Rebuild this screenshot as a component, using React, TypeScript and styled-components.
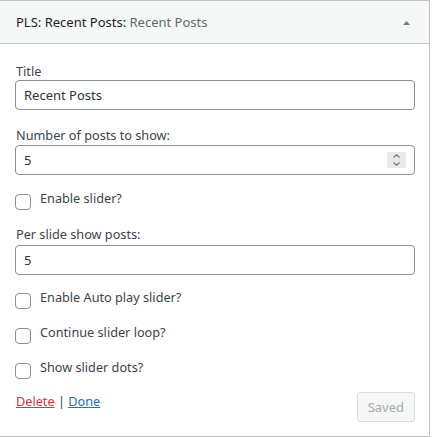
import * as React from 'react';
import styled, { createGlobalStyle } from 'styled-components';

const GlobalStyle = createGlobalStyle`
    html, body {
        margin: 0;
        padding: 0;
        background: #ffffff;
    }
    body {
        font-family: "Noto Sans", "Open Sans", sans-serif;
        font-size: 12.7px;
        color: #3c434a;
    }
`;

const checkboxes = [
    { label: 'Enable Auto play slider?', gap: 13 },
    { label: 'Continue slider loop?', gap: 14 },
    { label: 'Show slider dots?', gap: 14 },
];

const App = () => {
    return (
        <>
            <GlobalStyle />
            <Widget>
                <WidgetTop>
                    <WidgetTitle>
                        PLS: Recent Posts:<InWidgetTitle> Recent Posts</InWidgetTitle>
                    </WidgetTitle>
                    <Toggle width="7" height="4" viewBox="0 0 7 4">
                        <polygon points="3.5,0 7,4 0,4" fill="#787c82" />
                    </Toggle>
                </WidgetTop>
                <WidgetInside>
                    <Field $gap={18}>
                        <Label>Title</Label>
                        <TextInput type="text" defaultValue="Recent Posts" />
                    </Field>
                    <Field $gap={16} $labelGap={1}>
                        <Label>Number of posts to show:</Label>
                        <NumberBox>
                            <NumberValue type="text" defaultValue="5" />
                            <Spinner>
                                <svg width="7" height="4" viewBox="0 0 7 4">
                                    <polyline points="0.5,3.5 3.5,0.8 6.5,3.5" fill="none" stroke="#6f6f75" strokeWidth="1.1" />
                                </svg>
                                <svg width="7" height="4" viewBox="0 0 7 4">
                                    <polyline points="0.5,0.5 3.5,3.2 6.5,0.5" fill="none" stroke="#6f6f75" strokeWidth="1.1" />
                                </svg>
                            </Spinner>
                        </NumberBox>
                    </Field>
                    <CheckRow $gap={14}>
                        <Checkbox type="checkbox" />
                        <CheckLabel>Enable slider?</CheckLabel>
                    </CheckRow>
                    <Field $gap={15} $labelGap={2}>
                        <Label>Per slide show posts:</Label>
                        <TextInput type="text" defaultValue="5" />
                    </Field>
                    {checkboxes.map((item) => (
                        <CheckRow key={item.label} $gap={item.gap}>
                            <Checkbox type="checkbox" />
                            <CheckLabel>{item.label}</CheckLabel>
                        </CheckRow>
                    ))}
                    <Actions>
                        <Links>
                            <DeleteLink href="#">Delete</DeleteLink>
                            <Separator> | </Separator>
                            <DoneLink href="#">Done</DoneLink>
                        </Links>
                        <SavedButton disabled>Saved</SavedButton>
                    </Actions>
                </WidgetInside>
            </Widget>
        </>
    );
};

export default App;

const Widget = styled.div`
    width: 429px;
    border: 1px solid #c3c4c7;
    border-left: none;
    background: #ffffff;
`;

const WidgetTop = styled.div`
    height: 42px;
    display: flex;
    align-items: center;
    justify-content: space-between;
    padding: 0 16px 0 16px;
    background: #f6f7f7;
    border-bottom: 1px solid #c3c4c7;
`;

const WidgetTitle = styled.h3`
    margin: 0;
    font-size: 13px;
    font-weight: 400;
    line-height: 18px;
    color: #1d2327;
`;

const InWidgetTitle = styled.span`
    color: #646970;
`;

const Toggle = styled.svg`
    margin-right: 3px;
    margin-top: 1px;
`;

const WidgetInside = styled.div`
    display: flex;
    flex-direction: column;
    padding: 0 14px 14px 15px;
`;

const Field = styled.div<{ $gap: number; $labelGap?: number }>`
    display: flex;
    flex-direction: column;
    margin-top: ${(p) => p.$gap}px;
    gap: ${(p) => p.$labelGap ?? 0}px;
`;

const Label = styled.label`
    display: block;
    line-height: 18px;
    padding-left: 1px;
`;

const TextInput = styled.input`
    box-sizing: border-box;
    width: 100%;
    height: 30px;
    margin: 0;
    padding: 0 8px;
    border: 1px solid #8c8f94;
    border-radius: 4px;
    background: #ffffff;
    font-family: "Noto Sans", "Open Sans", sans-serif;
    font-size: 13px;
    color: #2c3338;
    outline: none;
`;

const NumberBox = styled.div`
    box-sizing: border-box;
    display: flex;
    align-items: center;
    height: 30px;
    padding: 0 8px 0 0;
    border: 1px solid #8c8f94;
    border-radius: 4px;
    background: #ffffff;
`;

const NumberValue = styled.input`
    flex: 1;
    min-width: 0;
    height: 100%;
    margin: 0;
    padding: 0 8px;
    border: none;
    background: transparent;
    font-family: "Noto Sans", "Open Sans", sans-serif;
    font-size: 13px;
    color: #2c3338;
    outline: none;
`;

const Spinner = styled.div`
    width: 19px;
    height: 16px;
    display: flex;
    flex-direction: column;
    align-items: center;
    justify-content: center;
    gap: 4px;
    background: #e9e9ed;
`;

const CheckRow = styled.div<{ $gap: number }>`
    display: flex;
    align-items: flex-start;
    margin-top: ${(p) => p.$gap}px;
`;

const Checkbox = styled.input`
    appearance: none;
    box-sizing: border-box;
    width: 16px;
    height: 16px;
    margin: 5px 8px 0 0;
    border: 1px solid #8c8f94;
    border-radius: 4px;
    background: #ffffff;
    flex-shrink: 0;
`;

const CheckLabel = styled.label`
    line-height: 18px;
    padding-left: 1px;
`;

const Actions = styled.div`
    display: flex;
    align-items: flex-start;
    justify-content: space-between;
    margin-top: 13px;
`;

const Links = styled.div`
    line-height: 18px;
    padding-left: 1px;
`;

const DeleteLink = styled.a`
    color: #d63638;
    text-decoration: underline;
`;

const DoneLink = styled.a`
    color: #2271b1;
    text-decoration: underline;
`;

const Separator = styled.span`
    color: #3c434a;
`;

const SavedButton = styled.button`
    box-sizing: border-box;
    height: 30px;
    padding: 0 10px;
    border: 1px solid #dcdcde;
    border-radius: 3px;
    background: #f6f7f7;
    color: #a7aaad;
    font-family: "Noto Sans", "Open Sans", sans-serif;
    font-size: 13px;
    line-height: 28px;
`;
